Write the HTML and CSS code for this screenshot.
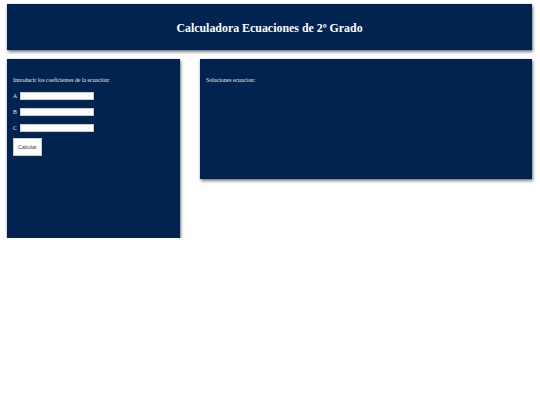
FILE: index.html
```html
<!DOCTYPE html>
<html lang="es">
<head>
<meta charset="utf-8">
<title>Calculadora Ecuaciones de 2º Grado</title>
<link rel="stylesheet" href="styles.css">
</head>
<body>
<header class="header">
  <h1 class="title">Calculadora Ecuaciones de 2º Grado</h1>
</header>
<main class="row">
  <section class="panel panel-left">
    <p class="label">Introducir los coeficientes de la ecuación:</p>
    <div class="field"><span class="letter">A</span><input class="input" type="text"></div>
    <div class="field"><span class="letter">B</span><input class="input" type="text"></div>
    <div class="field"><span class="letter">C</span><input class="input" type="text"></div>
    <button class="btn" type="button">Calcular</button>
  </section>
  <section class="panel panel-right">
    <p class="label">Soluciones ecuacion:</p>
  </section>
</main>
</body>
</html>
```
FILE: styles.css
```css
html, body {
  margin: 0;
  padding: 0;
  background: #ffffff;
}
body {
  padding: 4px 8px 0 7px;
  font-family: "Liberation Serif", "Times New Roman", serif;
  color: #ffffff;
}
.header {
  background: #00234f;
  height: 46px;
  width: 525px;
  display: flex;
  align-items: center;
  justify-content: center;
  box-shadow: 0 0 1px rgba(0,0,0,0.3), 1px 2px 3px rgba(0,0,0,0.5);
}
.title {
  margin: 0;
  font-size: 11.9px;
  font-weight: bold;
  padding-top: 2px;
}
.row {
  display: flex;
  align-items: flex-start;
  gap: 20px;
  margin-top: 9px;
}
.panel {
  background: #00234f;
  box-shadow: 0 0 1px rgba(0,0,0,0.3), 1px 2px 3px rgba(0,0,0,0.5);
  box-sizing: border-box;
  padding: 18px 6px 0 6px;
}
.panel-left {
  width: 173px;
  height: 179px;
}
.panel-right {
  width: 332px;
  height: 120px;
}
.label {
  margin: 0 0 8px 0;
  font-size: 5.8px;
  line-height: 7px;
  color: #e8ecf2;
}
.field {
  display: flex;
  align-items: center;
  height: 8px;
  margin-bottom: 8px;
}
.letter {
  font-size: 5.8px;
  width: 7px;
  color: #e8ecf2;
}
.input {
  width: 74px;
  height: 8px;
  box-sizing: border-box;
  border: 1px solid #c9ced6;
  background: #ffffff;
  padding: 0;
  margin: 0;
}
.btn {
  display: block;
  margin-top: -2px;
  width: 29px;
  height: 18px;
  padding: 0;
  border: 1px solid #c9ced6;
  background: #ffffff;
  color: #333333;
  font-family: "Liberation Sans", Arial, sans-serif;
  font-size: 5px;
}
```
